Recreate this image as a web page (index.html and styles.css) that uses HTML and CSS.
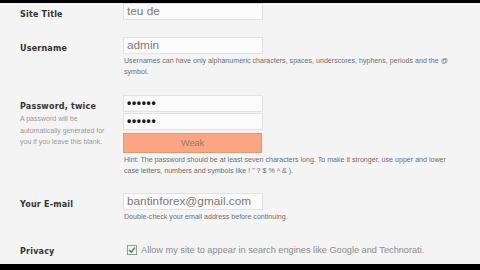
FILE: index.html
```html
<!DOCTYPE html>
<html>
<head>
<meta charset="utf-8">
<link rel="stylesheet" href="styles.css">
</head>
<body>
<div class="frame">
  <div class="bar-top"></div>
  <div class="content">
    <div class="row row-title">
      <div class="label">Site Title</div>
      <div class="field"><div class="input">teu de</div></div>
    </div>
    <div class="row row-user">
      <div class="label">Username</div>
      <div class="field">
        <div class="input">admin</div>
        <p class="help">Usernames can have only alphanumeric characters, spaces, underscores, hyphens, periods and the @<br>symbol.</p>
      </div>
    </div>
    <div class="row row-pass">
      <div class="label">Password, twice
        <p class="desc">A password will be<br>automatically generated for<br>you if you leave this blank.</p>
      </div>
      <div class="field">
        <div class="input dots">••••••</div>
        <div class="input dots second">••••••</div>
        <div class="weak">Weak</div>
        <p class="help hint">Hint: The password should be at least seven characters long. To make it stronger, use upper and lower<br>case letters, numbers and symbols like ! " ? $ % ^ &amp; ).</p>
      </div>
    </div>
    <div class="row row-email">
      <div class="label">Your E-mail</div>
      <div class="field">
        <div class="input">bantinforex@gmail.com</div>
        <p class="help">Double-check your email address before continuing.</p>
      </div>
    </div>
    <div class="row row-privacy">
      <div class="label">Privacy</div>
      <div class="field check-line">
        <svg class="checkbox" width="10" height="10" viewBox="0 0 10 10">
          <rect x="0.5" y="0.5" width="9" height="9" fill="#f2f2f2" stroke="#9a9a9a"/>
          <path d="M2.2 5.0 L4.2 7.2 L7.9 2.6" fill="none" stroke="#3f8a3f" stroke-width="1.5"/>
        </svg>
        <span class="allow">Allow my site to appear in search engines like Google and Technorati.</span>
      </div>
    </div>
  </div>
  <div class="bar-bottom"></div>
</div>
</body>
</html>
```
FILE: styles.css
```css
html, body {
  margin: 0;
  padding: 0;
}
body {
  width: 480px;
  height: 270px;
  overflow: hidden;
  background: #f4f4f4;
  font-family: "Liberation Sans", Arial, sans-serif;
}
.frame {
  display: flex;
  flex-direction: column;
  height: 270px;
}
.bar-top {
  height: 3px;
  background: #000;
  flex: none;
}
.bar-bottom {
  height: 6px;
  background: #000;
  flex: none;
}
.content {
  flex: 1;
  overflow: hidden;
}
.row {
  display: flex;
}
.label {
  width: 103px;
  padding-left: 20px;
  flex: none;
  font-family: "DejaVu Sans", Verdana, sans-serif;
  font-weight: bold;
  font-size: 8px;
  line-height: 12px;
  color: #333;
  padding-top: 6px;
  letter-spacing: 0.2px;
}
.field {
  flex: 1;
}
.input {
  width: 135px;
  height: 15px;
  border: 1px solid #e2e2e2;
  background: #fbfbfb;
  font-size: 11.8px;
  line-height: 15px;
  color: #7a7a7a;
  padding-left: 3px;
  box-sizing: content-box;
}
.help {
  margin: 2px 0 0 1px;
  font-size: 7.1px;
  line-height: 11px;
  color: #6f6f6f;
}
.desc {
  margin: 0;
  font-family: "Liberation Sans", Arial, sans-serif;
  font-weight: normal;
  font-size: 7px;
  line-height: 11.5px;
  color: #9a9a9a;
  letter-spacing: 0;
}
.row-title {
  margin-top: 0;
}
.row-user {
  margin-top: 16px;
}
.row-pass {
  margin-top: 17px;
}
.row-email {
  margin-top: 16px;
}
.row-privacy {
  margin-top: 17px;
}
.dots {
  font-size: 12px;
  font-weight: bold;
  color: #1a1a1a;
  letter-spacing: 0.7px;
}
.second {
  margin-top: 1px;
}
.weak {
  margin-top: 3px;
  width: 137px;
  height: 18px;
  background: #fca582;
  border: 1px solid #eb9671;
  font-size: 9px;
  line-height: 18px;
  text-align: center;
  color: #8f7d74;
}
.hint {
  margin-top: 2px;
}
.check-line {
  display: flex;
  align-items: center;
  padding-top: 2px;
  padding-left: 4px;
}
.checkbox {
  flex: none;
  display: block;
}
.allow {
  margin-left: 4px;
  font-size: 9.2px;
  color: #8a8a8a;
  line-height: 10px;
}
```
